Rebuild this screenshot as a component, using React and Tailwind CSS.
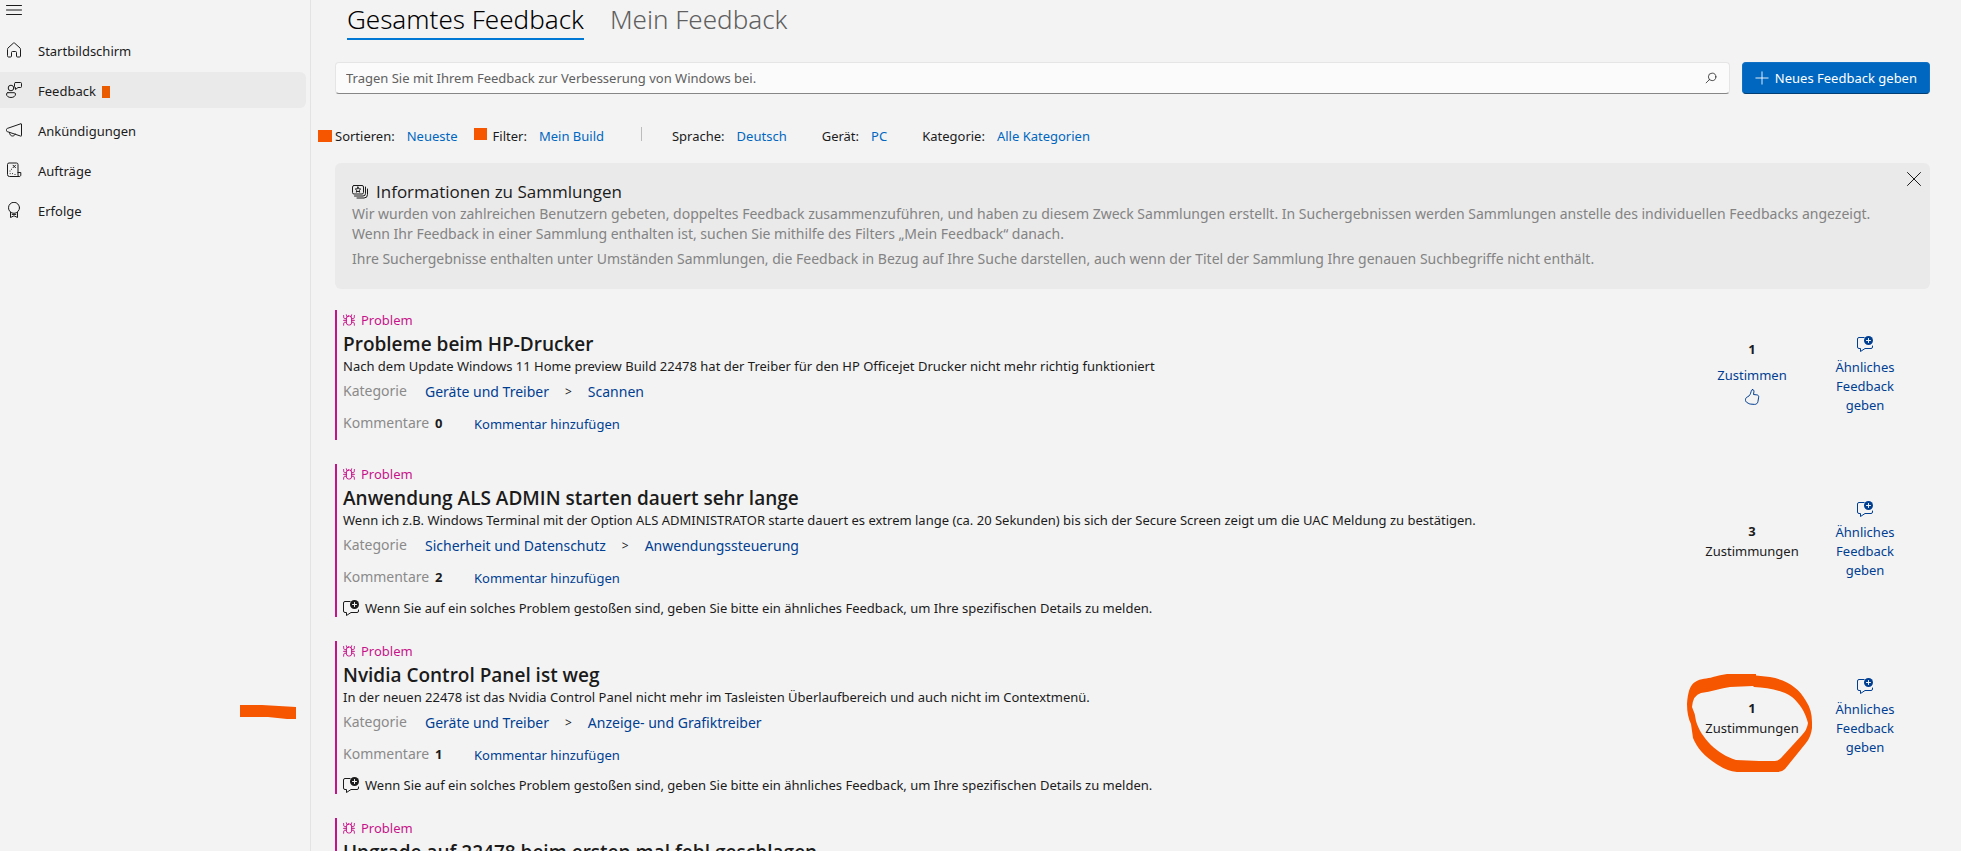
import { useState } from "react";
import clsx from "clsx";

function Icon({ children, className, size = 16, stroke = 1 }) {
  return (
    <svg
      width={size}
      height={size}
      viewBox="0 0 16 16"
      fill="none"
      stroke="currentColor"
      strokeWidth={stroke}
      strokeLinecap="round"
      strokeLinejoin="round"
      className={clsx("shrink-0", className)}
      aria-hidden="true"
    >
      {children}
    </svg>
  );
}

const HomeIcon = () => (
  <Icon>
    <path d="M1.5 7.2c0-.5.2-.9.5-1.2L7.2 1.3c.5-.5 1.1-.5 1.6 0L14 6c.3.3.5.7.5 1.2V14a1 1 0 0 1-1 1h-2a1 1 0 0 1-1-1v-3.5a1 1 0 0 0-1-1h-3a1 1 0 0 0-1 1V14a1 1 0 0 1-1 1h-2a1 1 0 0 1-1-1z" />
  </Icon>
);

const FeedbackIcon = () => (
  <Icon>
    <circle cx="5" cy="6" r="2.8" />
    <path d="M1.8 10.7h6.4c.8 0 1.3.6 1.3 1.3 0 2.2-1.8 3.5-4.5 3.5S.5 14.2.5 12c0-.7.5-1.3 1.3-1.3z" />
    <path d="M9.5.5h5a1 1 0 0 1 1 1v3a1 1 0 0 1-1 1H12l-2.500 2v-2H9.500a1 1 0 0 1-1-1v-3a1 1 0 0 1 1-1z" />
  </Icon>
);

const MegaphoneIcon = () => (
  <Icon>
    <path d="M15.5 2.500v11c0 .6-.2.800-.8.600L1.500 9.700a1.200 1.200 0 0 1-1-1.100V7.500c0-.5.4-1 .9-1.100L15 1.700c.3-.1.5.1.5.8z" />
    <path d="M3.500 10.500c0 2 1.200 3.500 3 3.500 1.400 0 2.400-.8 2.700-2" />
  </Icon>
);

const QuestIcon = () => (
  <Icon>
    <path d="M13 14.500H3.500a2 2 0 0 1-2-2v-10A1.500 1.500 0 0 1 3 1h7.500A1.500 1.500 0 0 1 12 2.500V13c0 .8.500 1.500 1.300 1.500s1.500-.6 1.500-1.500v-2.500H12" />
    <path d="M7 3.200l2.500 2.500M9.500 3.200L7 5.700" />
    <path d="M5.500 7.200v.1M4 9v.1M4.200 11.600v.1M6.500 11.600v.1M9 12.400v.1" />
  </Icon>
);

const AwardIcon = () => (
  <Icon>
    <circle cx="8" cy="5.800" r="5.500" />
    <path d="M4.500 10.300v5.200l3.500-1.700 3.500 1.700v-5.200" />
    <path d="M6.200 12.400h3.600" />
  </Icon>
);

const BugIcon = () => (
  <Icon size={12} stroke={1.3}>
    <rect x="4.500" y="2.700" width="7" height="12" rx="3" />
    <path d="M5.500 3.800L4.500 1M10.500 3.800l1-2.800M4.500 6.200H2.200C1.200 6.200.8 5 .8 2M11.500 6.200h2.300c1 0 1.400-1.200 1.400-4.200M4.500 8.500H.8M11.500 8.500h3.700M4.500 11H2.200C1.200 11 .8 12.500.8 15M11.500 11h2.300c1 0 1.400 1.500 1.400 4" />
  </Icon>
);

const SimilarIcon = ({ plus }) => (
  <Icon>
    <path d="M7 1.500H2A1.500 1.500 0 0 0 .5 3v8A1.500 1.500 0 0 0 2 12.500h1.500v3l4.500-3h6a1.500 1.500 0 0 0 1.500-1.500v-1" />
    <circle cx="11.500" cy="4.500" r="4.500" fill="currentColor" stroke="none" />
    <path d="M11.500 2.500v4M9.500 4.500h4" stroke={plus} />
  </Icon>
);

const ThumbIcon = () => (
  <Icon>
    <path d="M8.500.6c1.200 0 1.700 1 1.400 2.300L9.500 5.500l3.400.4c1.200.1 2 1 1.800 2.200l-.8 4.600c-.3 1.700-1.700 2.800-3.400 2.700l-3.700-.3c-.7 0-1.300-.2-1.900-.5L3 13.500c-1-.5-1.600-1.600-1.500-2.700 0-1.600.9-2.600 2.300-3.100C5.600 7 6.500 5 7.200 2.300 7.400 1.300 7.600.6 8.500.6z" />
  </Icon>
);

const CollectionIcon = () => (
  <Icon>
    <rect x=".5" y="1.500" width="11" height="8.500" rx="1.500" />
    <path d="M6 3l.8 1.800 1.900.2-1.400 1.300.4 1.900L6 7.200 4.300 8.200l.4-1.900L3.300 5l1.900-.2z" />
    <path d="M13.500 3v6.500A2.500 2.500 0 0 1 11 12H2.500M15.500 5v5.500A3.500 3.500 0 0 1 12 14H5" />
  </Icon>
);

const navItems = [
  { name: "Startbildschirm", icon: HomeIcon },
  { name: "Feedback", icon: FeedbackIcon, active: true },
  { name: "Ankündigungen", icon: MegaphoneIcon },
  { name: "Aufträge", icon: QuestIcon },
  { name: "Erfolge", icon: AwardIcon },
];

const hint =
  "Wenn Sie auf ein solches Problem gestoßen sind, geben Sie bitte ein ähnliches Feedback, um Ihre spezifischen Details zu melden.";

const entries = [
  {
    title: "Probleme beim HP-Drucker",
    text: "Nach dem Update Windows 11 Home preview Build 22478 hat der Treiber für den HP Officejet Drucker nicht mehr richtig funktioniert",
    category: ["Geräte und Treiber", "Scannen"],
    comments: 0,
    votes: 1,
    canVote: true,
  },
  {
    title: "Anwendung ALS ADMIN starten dauert sehr lange",
    text: "Wenn ich z.B. Windows Terminal mit der Option ALS ADMINISTRATOR starte dauert es extrem lange (ca. 20 Sekunden) bis sich der Secure Screen zeigt um die UAC Meldung zu bestätigen.",
    category: ["Sicherheit und Datenschutz", "Anwendungssteuerung"],
    comments: 2,
    votes: 3,
    hint,
  },
  {
    title: "Nvidia Control Panel ist weg",
    text: "In der neuen 22478 ist das Nvidia Control Panel nicht mehr im Tasleisten Überlaufbereich und auch nicht im Contextmenü.",
    category: ["Geräte und Treiber", "Anzeige- und Grafiktreiber"],
    comments: 1,
    votes: 1,
    hint,
    circled: true,
  },
  // details not loaded yet
  { title: "Upgrade auf 22478 beim ersten mal fehl geschlagen" },
];

function FilterItem({ label, value }) {
  return (
    <div className="flex gap-3">
      <span className="text-[#1b1b1b]">{label}</span>
      <button className="text-[#0067c0]">{value}</button>
    </div>
  );
}

function Sidebar() {
  return (
    <aside className="relative w-[311px] shrink-0 border-r border-[#e3e3e3]">
      <button aria-label="Navigation" className="flex h-8 items-start px-1.5 pt-0.5">
        <Icon>
          <path d="M.5 3.500h15M.5 8h15M.5 12.500h15" />
        </Icon>
      </button>
      <nav className="flex flex-col gap-1">
        {navItems.map((item) => {
          const NavIcon = item.icon;
          return (
            <a
              key={item.name}
              href="#"
              className={clsx("mr-1 flex h-9 items-center gap-4 rounded-r-md pl-1.5", item.active && "bg-[#eaeaea]")}
            >
              <NavIcon />
              <span className="pt-0.5">{item.name}</span>
              {item.active && <span className="mt-1 -ml-2.5 h-3 w-2 bg-[#ea5b00]" />}
            </a>
          );
        })}
      </nav>
      {/* marker stroke */}
      <svg className="absolute top-[705px] left-[240px]" width="56" height="14" viewBox="0 0 56 14" aria-hidden="true">
        <path d="M0 0h22l34 2v12H47L28 12H0z" fill="#f65600" />
      </svg>
    </aside>
  );
}

function EntryDetails({ entry }) {
  return (
    <>
      <p className="leading-5">{entry.text}</p>
      <div className="flex h-[30px] items-center pt-0.5 text-sm">
        <span className="w-[82px] pb-0.5 text-[#8a8a8a]">Kategorie</span>
        <div className="flex items-center gap-4 text-[#003e92]">
          <a href="#">{entry.category[0]}</a>
          <span className="text-xs text-[#1b1b1b]">&gt;</span>
          <a href="#">{entry.category[1]}</a>
        </div>
      </div>
      <div className="flex h-[34px] items-center pt-0.5">
        <span className="w-[92px] pb-0.5 text-sm text-[#8a8a8a]">Kommentare</span>
        <b className="w-[39px] pb-0.5">{entry.comments}</b>
        <button className="text-[#003e92]">Kommentar hinzufügen</button>
      </div>
      {entry.hint && (
        <p className="flex h-[23px] items-end gap-1.5 pb-px">
          <SimilarIcon plus="#f3f3f3" />
          <span className="leading-4">{entry.hint}</span>
        </p>
      )}
    </>
  );
}

function EntryActions({ entry }) {
  return (
    <>
      <div className="relative flex w-32 shrink-0 flex-col items-center justify-center">
        <b className="leading-5">{entry.votes}</b>
        {entry.canVote ? (
          <button className="flex flex-col items-center gap-1 pt-1.5 pb-1.5 text-[#003e92]">
            Zustimmen
            <ThumbIcon />
          </button>
        ) : (
          <span>Zustimmungen</span>
        )}
        {entry.circled && (
          <svg className="absolute top-[33px] -left-px" width="125" height="98" viewBox="0 0 125 98" aria-hidden="true">
            <path
              fill="#f65600"
              fillRule="evenodd"
              d="M40 0H69V1.500L83 3C100 6 112 14 119 27Q125 36 125 48V54Q124 63 119 69L98 95Q95 98 91 98H50Q40 97 31 91C18 83 10 74 6 64L4 50Q0 42 0 30Q1 12 8 8C14 4 20 5 26 3Q33 1 40 0ZM43 13C34 14 24 18 14 19Q6 21 5 33Q8 39 9 47C14 64 30 80 49 86L72 87H88Q91 87 94 84L115 61Q120 56 121 49C118 37 112 29 105 23C93 15 80 14 67 13L66 12Z"
            />
          </svg>
        )}
      </div>
      <button className="mr-5 ml-1 flex w-[90px] shrink-0 flex-col items-center justify-center gap-1.5 text-[#003e92]">
        <SimilarIcon plus="#f3f3f3" />
        <span className="w-[70px] text-center leading-[19px]">Ähnliches Feedback geben</span>
      </button>
    </>
  );
}

function Entry({ entry }) {
  return (
    <article className="flex border-l-2 border-[#c7138a]">
      <div className="min-w-0 flex-1 pl-1.5">
        <div className="flex h-5 items-center gap-1.5 text-[#c7138a]">
          <BugIcon />
          <span>Problem</span>
        </div>
        <h2 className="h-[26px] font-['Open_Sans',sans-serif] text-[19px] leading-7 font-semibold">{entry.title}</h2>
        {entry.text && <EntryDetails entry={entry} />}
      </div>
      {entry.text && <EntryActions entry={entry} />}
    </article>
  );
}

export default function App() {
  const [query, setQuery] = useState("");
  const [showInfo, setShowInfo] = useState(true);

  return (
    <div className="flex h-screen overflow-hidden bg-[#f3f3f3] font-['Noto_Sans',sans-serif] text-[13px] leading-5 text-[#1b1b1b]">
      <Sidebar />

      <main className="min-w-0 flex-1 pr-[31px] pl-6">
        {/* Tabs */}
        <div role="tablist" className="flex gap-[26px] pl-3 text-[26px] leading-[38px] font-light">
          <button role="tab" aria-selected="true" className="border-b-2 border-[#0078d4] text-black">
            Gesamtes Feedback
          </button>
          <button role="tab" aria-selected="false" className="border-b-2 border-transparent text-[#5f5f5f]">
            Mein Feedback
          </button>
        </div>

        {/* Search */}
        <div className="mt-[22px] flex gap-3">
          <label className="flex h-8 flex-1 items-center rounded border border-b-[#868686] border-[#e5e5e5] bg-[#fbfbfb] px-3 pl-2.5">
            <input
              value={query}
              onChange={(e) => setQuery(e.target.value)}
              aria-label="Feedback suchen"
              placeholder="Tragen Sie mit Ihrem Feedback zur Verbesserung von Windows bei."
              className="flex-1 outline-none placeholder:text-[#606060]"
            />
            <Icon size={12}>
              <circle cx="9.500" cy="6.500" r="5" />
              <path d="M6 10l-4.500 4.500" />
            </Icon>
          </label>
          <button className="flex h-8 items-center gap-1.5 rounded border border-[#0f70c4] border-b-[#003e73] bg-[#0067c0] px-3 text-white">
            <Icon size={14}>
              <path d="M8 1v14M1 8h14" />
            </Icon>
            Neues Feedback geben
          </button>
        </div>

        {/* Filters */}
        <div className="relative flex h-[69px] items-center pt-3.5">
          <span className="absolute top-9 -left-[17px] h-3 w-3.5 bg-[#f65600]" />
          <FilterItem label="Sortieren:" value="Neueste" />
          <span className="mr-1.5 mb-1 ml-4 h-3 w-[13px] bg-[#f65600]" />
          <FilterItem label="Filter:" value="Mein Build" />
          <span className="mx-[30px] mb-1 ml-[37px] h-3.5 w-px bg-[#bcbcbc]" />
          <div className="flex gap-[35px]">
            <FilterItem label="Sprache:" value="Deutsch" />
            <FilterItem label="Gerät:" value="PC" />
            <FilterItem label="Kategorie:" value="Alle Kategorien" />
          </div>
        </div>

        {/* Info panel */}
        {showInfo && (
          <section className="relative rounded-md bg-[#eaeaea] px-[17px] pt-4 pb-5 text-sm text-[#838383]">
            <h2 className="flex items-center gap-2 font-['Open_Sans',sans-serif] text-[17px] leading-[25px] text-[#1b1b1b]">
              <CollectionIcon />
              Informationen zu Sammlungen
            </h2>
            <p>
              Wir wurden von zahlreichen Benutzern gebeten, doppeltes Feedback zusammenzuführen, und haben zu diesem Zweck Sammlungen erstellt. In Suchergebnissen werden Sammlungen anstelle des individuellen Feedbacks angezeigt.
              <br />
              Wenn Ihr Feedback in einer Sammlung enthalten ist, suchen Sie mithilfe des Filters „Mein Feedback“ danach.
            </p>
            <p className="mt-[5px]">
              Ihre Suchergebnisse enthalten unter Umständen Sammlungen, die Feedback in Bezug auf Ihre Suche darstellen, auch wenn der Titel der Sammlung Ihre genauen Suchbegriffe nicht enthält.
            </p>
            <button onClick={() => setShowInfo(false)} aria-label="Schließen" className="absolute top-2 right-2 text-[#1b1b1b]">
              <Icon>
                <path d="M1.500 1.500l13 13M14.500 1.500l-13 13" />
              </Icon>
            </button>
          </section>
        )}

        {/* Feedback list */}
        <div className="mt-[21px] flex flex-col gap-6">
          {entries.map((entry) => (
            <Entry key={entry.title} entry={entry} />
          ))}
        </div>
      </main>
    </div>
  );
}
